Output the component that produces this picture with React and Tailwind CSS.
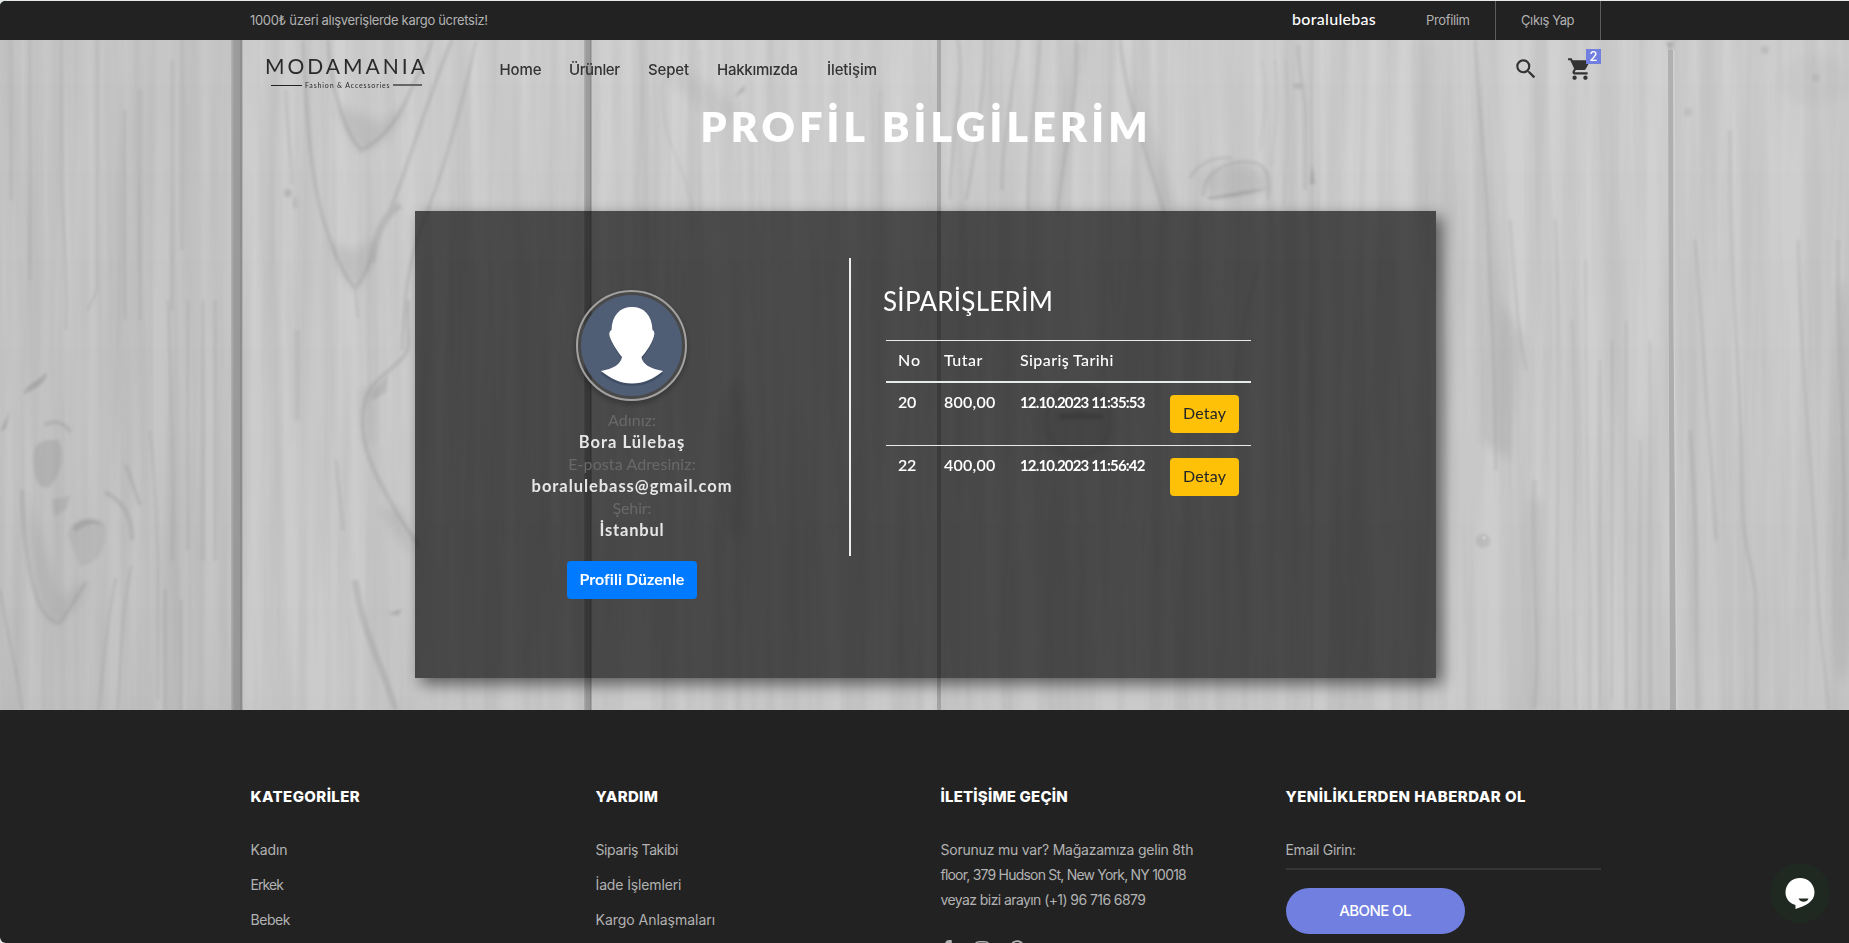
import React from "react";
import { MdSearch, MdShoppingCart } from "react-icons/md";
import { FaFacebookF, FaInstagram, FaPinterestP } from "react-icons/fa";

const navLinks = [
  ["Home", "w-[69.5px] tracking-[-0.12px]"],
  ["Ürünler", "w-[79px] tracking-[-0.39px]"],
  ["Sepet", "w-[69px] tracking-[-0.17px]"],
  ["Hakkımızda", "w-[110px] tracking-[-0.25px]"],
  ["İletişim", "w-[60px] tracking-[-0.11px]"],
];

const orders = [
  { no: "20", total: "800,00", date: "12.10.2023 11:35:53" },
  { no: "22", total: "400,00", date: "12.10.2023 11:56:42" },
];

const profile = [
  { label: "Adınız:", labelClass: "tracking-[0.09px]", value: "Bora Lülebaş", valueClass: "tracking-[1.05px]" },
  { label: "E-posta Adresiniz:", labelClass: "tracking-[0.1px]", value: "boralulebass@gmail.com", valueClass: "tracking-[0.95px]" },
  { label: "Şehir:", labelClass: "tracking-[-0.13px]", value: "İstanbul", valueClass: "tracking-[0.8px]" },
];

function Wood() {
  return (
    <svg className="absolute inset-0 -z-10 h-full w-full" viewBox="0 40 1849 670" preserveAspectRatio="none" aria-hidden="true">
      <defs>
        <filter id="grain" x="0" y="0" width="100%" height="100%" colorInterpolationFilters="sRGB">
          <feTurbulence type="fractalNoise" baseFrequency="0.06 0.0022" numOctaves="3" seed="7" />
          <feColorMatrix values="0 0 0 0 0.5  0 0 0 0 0.5  0 0 0 0 0.5  0.32 0 0 0 -0.09" />
        </filter>
        <filter id="soft" x="-10%" y="-10%" width="120%" height="120%">
          <feGaussianBlur stdDeviation="1.6" />
        </filter>
        <filter id="softer" x="-20%" y="-20%" width="140%" height="140%">
          <feGaussianBlur stdDeviation="5" />
        </filter>
        <linearGradient id="gap" x1="0" x2="1" y1="0" y2="0">
          <stop offset="0" stopColor="#b4b4b4" />
          <stop offset="0.25" stopColor="#9d9d9d" />
          <stop offset="0.7" stopColor="#9b9b9b" />
          <stop offset="0.85" stopColor="#868686" />
          <stop offset="1" stopColor="#c4c4c4" />
        </linearGradient>
        <linearGradient id="fade" x1="0" x2="0" y1="0" y2="1">
          <stop offset="0" stopColor="#000" stopOpacity="0" />
          <stop offset="1" stopColor="#000" stopOpacity="0.03" />
        </linearGradient>
      </defs>
      <rect x="0" y="40" width="232" height="670" fill="#cacaca" />
      <rect x="232" y="40" width="356" height="670" fill="#d1d1d1" />
      <rect x="588" y="40" width="352" height="670" fill="#d2d2d2" />
      <rect x="940" y="40" width="373" height="670" fill="#d1d1d1" />
      <rect x="1313" y="40" width="361" height="670" fill="#d2d2d2" />
      <rect x="1674" y="40" width="175" height="670" fill="#d0d0d0" />
      <rect x="0" y="40" width="1849" height="670" filter="url(#grain)" />

      <g filter="url(#softer)" fill="#8e8e8e" opacity="0.2">
        <path d="M288 250L300 320V420L290 460Z" opacity="0.2" />
        <path d="M334 104L348 135L362 152L388 138L408 104L380 122Z" />
        <path d="M326 240L342 275L355 290L372 268L376 240L352 250Z" />
        <path d="M25 490C30 560 40 625 58 622C78 610 88 590 84 580L60 600Z" />
        <path d="M1072 40L1086 40L1072 130L1062 210L1052 210Z" />
        <path d="M1118 40L1132 90L1162 210L1176 210L1142 110Z" />
        <path d="M1476 40L1500 300L1524 340L1510 460L1482 440L1486 260Z" />
        <path d="M1410 40L1440 40L1452 220L1440 300L1415 200Z" opacity="0.5" />
        <path d="M1530 500L1542 500L1542 710L1530 710Z" />
        <path d="M360 390L374 385L372 440L364 450Z" />
        <path d="M380 510L402 510L418 560L400 540Z" />
        <ellipse cx="1235" cy="182" rx="32" ry="18" />
        <ellipse cx="1078" cy="425" rx="38" ry="40" />
        <ellipse cx="735" cy="460" rx="12" ry="80" />
        <ellipse cx="1815" cy="80" rx="34" ry="24" opacity="0.35" />
        <ellipse cx="1842" cy="480" rx="12" ry="200" />
        <path d="M662 75L690 70L740 110L720 125Z" opacity="0.6" />
      </g>

      <g filter="url(#soft)" fill="none" stroke="#8c8c8c" strokeWidth="3" opacity="0.27">
        <path d="M303 40C306 120 312 180 322 215S345 278 355 288C368 275 372 250 388 215S430 90 452 40" strokeWidth="3.5" />
        <path d="M328 40C330 80 342 130 361 150C385 140 402 112 410 92S428 60 432 40" strokeWidth="4" />
        <path d="M476 40C462 110 440 180 424 220S404 300 402 350" />
        <path d="M286 90C286 130 292 150 292 185" strokeWidth="2" />
        <path d="M355 290L358 318" strokeWidth="2" />
        <path d="M400 205C385 215 376 230 372 262" strokeWidth="7" />
        <path d="M408 300C406 340 412 345 404 356S372 380 366 398S362 438 370 460S400 520 418 545" strokeWidth="4" />
        <path d="M355 580C362 630 380 660 396 710" strokeWidth="6" />
        <path d="M336 460L343 530" strokeWidth="2" />
        <path d="M297 330V420" strokeWidth="6" opacity="0.5" />
        <path d="M22 490C24 560 35 600 44 612S60 628 66 614L86 582" strokeWidth="3" />
        <path d="M126 465L140 505" />
        <path d="M116 578C106 620 105 660 98 710M131 566C120 620 122 660 117 710M165 590V710M181 600V710M0 590C8 640 18 670 22 710" strokeWidth="2" />
        <path d="M150 430C156 480 156 520 158 560V700M168 300C172 420 174 480 172 560M188 300V550M203 300V560M215 300V560" strokeWidth="2" />
        <path d="M62 40V180C62 230 68 260 66 330M97 40V290L88 310M11 40V200M30 40V280M125 110V320M140 90V320M172 60V310M182 40V250" strokeWidth="2.5" opacity="0.8" />
        <path d="M105 492C120 500 132 512 132 540M45 425C55 418 66 424 70 432" strokeWidth="4" />
        <path d="M1120 40C1126 100 1146 150 1164 212" />
        <path d="M1076 40C1080 100 1062 150 1058 212M958 40C966 80 950 140 950 200M985 40C985 90 978 140 966 200M1018 40C1014 90 1002 140 1002 190M1040 40C1036 100 1028 140 1028 210" strokeWidth="2.5" />
        <path d="M1298 45C1298 70 1304 88 1305 110V190" strokeWidth="2.5" />
        <path d="M1262 60C1270 100 1262 130 1260 150M1275 60C1281 110 1272 140 1272 165M1285 60C1292 120 1286 160 1284 205" strokeWidth="1.5" opacity="0.6" />
        <path d="M1475 40C1480 120 1486 170 1488 230S1496 380 1496 470" strokeWidth="2.5" />
        <path d="M1510 220C1514 270 1516 320 1526 370" strokeWidth="2" />
        <path d="M1555 220C1560 300 1556 400 1558 710M1572 320C1578 420 1572 560 1576 710M1586 260C1584 400 1592 560 1590 710M1600 360V710M1612 340V700M1626 320V710M1640 440V710M1650 340V710" strokeWidth="2" opacity="0.7" />
        <path d="M1535 480C1530 560 1542 640 1534 710" strokeWidth="5" opacity="0.6" />
        <path d="M1730 130C1730 300 1742 400 1742 480S1754 560 1756 600V710M1695 240C1704 350 1710 450 1716 540M1690 430C1700 560 1694 620 1698 710" strokeWidth="3" opacity="0.8" />
        <path d="M1798 240C1800 360 1812 460 1816 560S1826 660 1828 710M1838 240C1836 330 1846 420 1844 560" strokeWidth="3" opacity="0.7" />
        <path d="M640 40C646 140 632 190 640 211M662 80C660 150 690 170 692 211M700 50V211M760 130V211M845 60V211M880 90V211" strokeWidth="2" opacity="0.5" />
        <path d="M1203 196C1204 170 1230 160 1250 162S1270 180 1268 200M1190 178C1200 160 1220 156 1232 158" strokeWidth="2.5" />
        <path d="M1238 400C1230 360 1250 300 1260 260" opacity="0.5" />
        <ellipse cx="1078" cy="420" rx="32" ry="36" strokeWidth="2" />
        <path d="M1312 40V710" strokeWidth="2" opacity="0.6" />
      </g>

      <g filter="url(#soft)" fill="#8a8a8a" opacity="0.45">
        <path d="M24 392C30 382 40 380 47 372C46 384 36 388 24 394Z" />
        <path d="M0 432L10 410L6 428Z" />
        <path d="M34 455C34 440 48 440 58 440C66 455 60 475 50 486C38 492 33 475 34 455Z" opacity="0.6" />
        <path d="M52 500L70 496L66 510L54 516Z" opacity="0.5" />
        <path d="M68 535C70 515 100 515 105 525C108 550 95 565 80 566Z" opacity="0.35" />
        <path d="M72 528C80 516 98 518 104 526C96 522 84 524 76 532Z" />
        <path d="M372 392L388 375L386 392L372 400Z" opacity="0.6" />
        <path d="M733 98L745 85L744 91Z" />
        <path d="M1208 197C1225 196 1250 188 1270 189C1250 192 1228 200 1208 199Z" />
        <path d="M1058 414L1080 412L1103 415V419H1060Z" />
        <path d="M1310 184L1312 163L1315 184Z" />
        <path d="M1666 42H1674L1670 52Z" />
        <ellipse cx="288" cy="193" rx="4" ry="4" opacity="0.7" />
        <ellipse cx="295" cy="203" rx="3" ry="6" opacity="0.4" />
        <ellipse cx="1298" cy="86" rx="5" ry="3" opacity="0.6" />
        <ellipse cx="1483" cy="541" rx="7" ry="7" opacity="0.5" />
        <circle cx="1765" cy="50" r="4" opacity="0.5" />
        <circle cx="1816" cy="78" r="4" opacity="0.4" />
        <circle cx="1688" cy="112" r="4" opacity="0.4" />
        <path d="M388 614L402 609L398 615Z" />
      </g>
      <circle cx="1484" cy="538" r="2" fill="#d0d0d0" />

      <rect x="231" y="40" width="12" height="670" fill="url(#gap)" />
      <rect x="584" y="40" width="8" height="670" fill="url(#gap)" />
      <rect x="937" y="40" width="4" height="670" fill="#a8a8a8" />
      <path d="M1668 50H1673L1676 710H1670Z" fill="#b0b0b0" />
      <path d="M1674 50V320L1677 710" fill="none" stroke="#d8d8d8" />
      <rect x="0" y="40" width="1849" height="670" fill="url(#fade)" />
    </svg>
  );
}

function Logo() {
  return (
    <div className="mt-[15px] ml-4 flex w-[160px] flex-col items-center text-[#2a2a2a]">
      <div className="w-[162px] font-['Lato'] text-[21px] leading-[21px] font-normal tracking-[3px] whitespace-nowrap">MODAMANIA</div>
      <div className="mt-[3px] flex w-full items-center pl-[5px]">
        <span className="h-px w-[31px] bg-[#222]" />
        <span className="ml-[3px] w-[85px] font-['Lato'] text-[7px] leading-[12px] tracking-[0.85px] whitespace-nowrap">Fashion &amp; Accessories</span>
        <span className="ml-[3px] h-[2px] w-[29px] bg-[#666]" />
      </div>
    </div>
  );
}

function Avatar() {
  return (
    <div className="mr-[2px] size-[111px] shrink-0 rounded-full border-2 border-[#a3a1a0] p-[3px] shadow-[0_3px_6px_rgba(0,0,0,0.3)]">
      <svg viewBox="0 0 101 101" className="size-[101px]">
        <circle cx="50.5" cy="50.5" r="50.5" fill="#4f5d75" />
        <path
          d="M20 79C30 87 40 91 51 91S73 87 82 79L80 77C70 75 61 71 61 64C66 58 71 49 73 42C74 39 73 37 71.500 36C71 20 64 12.500 51 12.500S31 20 30.500 36C28.500 37 28 39 28.500 42C31 49 36 58 41 64C40 71 32 75 22 76Z"
          fill="#37445a" opacity="0.6"
        />
        <path
          d="M20 76C30 84 40 88.500 51 88.500S73 84 82 76C70 74 61 69 60.500 62C66 56 71 48 73 41C74 38 73 35.500 71.500 35C71 20 63 12 51 12S31 20 30.500 35C28.500 36 28 38 28.500 41C31 48 36 56 41 62C40 69 32 74 20 76Z"
          fill="#fff"
        />
      </svg>
    </div>
  );
}

function Orders() {
  const row = "grid grid-cols-[46px_76px_150px_69px] pl-3";
  return (
    <div className="w-[365px] font-['Lato'] text-[16px] text-white">
      <div className={row + " h-[43px] border-t border-b-2 border-t-[#e6ecea] border-b-[#e6ecea] pt-[7px] leading-6 font-medium"}>
        <span className="tracking-[0.9px]">No</span>
        <span className="tracking-[0.45px]">Tutar</span>
        <span className="whitespace-nowrap tracking-[0.4px]">Sipariş Tarihi</span>
      </div>
      {orders.map((o, i) => (
        <div key={o.no} className={row + (i ? " h-[63px] border-t border-[#e6ecea] pt-3" : " h-[62px] pt-3")}>
          <span className="-mt-[5px] font-semibold leading-6 tracking-[-0.4px]">{o.no}</span>
          <span className="-mt-[5px] font-semibold leading-6 tracking-[0.25px]">{o.total}</span>
          <span className="-mt-[5px] text-[15px] font-bold leading-6 tracking-[-0.83px] whitespace-nowrap">{o.date}</span>
          <button className="h-[38px] rounded bg-[#ffc107] pb-[2px] tracking-[0.2px] text-[#212529]">Detay</button>
        </div>
      ))}
    </div>
  );
}

function FooterTitle({ children, className }) {
  return <h4 className={"font-['Inter'] text-[15px] leading-5 font-extrabold whitespace-nowrap text-white " + className}>{children}</h4>;
}

function FooterLinks({ title, titleClass, items }) {
  return (
    <div className="w-[345px]">
      <FooterTitle className={titleClass}>{title}</FooterTitle>
      <ul className="mt-[32px]">
        {items.map(([t, c]) => (
          <li key={t} className={"h-[35px] leading-[21px] whitespace-nowrap " + c}>{t}</li>
        ))}
      </ul>
    </div>
  );
}

export default function App() {
  return (
    <div className="h-[943px] w-[1849px] overflow-hidden bg-[#e6ebe9]">
      <div className="relative flex h-full flex-col overflow-hidden rounded-l-[6px] border-t border-[#e6ebe9] bg-[#222] font-['Inter']">
        <header className="h-[39px] shrink-0 bg-[#222] pl-[250px]">
          <div className="flex h-full w-[1351px] items-center text-[13px] text-[#b2b2b2]">
            <span className="tracking-[-0.32px] whitespace-nowrap">1000₺ üzeri alışverişlerde kargo ücretsiz!</span>
            <span className="ml-auto w-[108px] pb-[3px] font-['Lato'] text-[16px] font-medium tracking-[0.3px] text-white">boralulebas</span>
            <a className="flex h-full w-[96px] items-center border-r border-[#5c5c5c] pl-[26px] tracking-[-0.35px]">Profilim</a>
            <a className="flex h-full w-[105px] items-center border-r border-[#5c5c5c] pl-[25px] tracking-[-0.38px] whitespace-nowrap">Çıkış Yap</a>
          </div>
        </header>

        <main className="relative isolate h-[670px] shrink-0">
          <Wood />
          <div className="ml-[250px] flex h-[60px] w-[1351px] items-start">
            <Logo />
            <nav className="mt-[20px] ml-[73.5px] flex text-[15px] leading-5 font-medium text-[#333]">
              {navLinks.map(([t, c]) => (
                <a key={t} className={"whitespace-nowrap " + c}>{t}</a>
              ))}
            </nav>
            <div className="mt-[16px] ml-auto flex text-[26px] text-[#333]">
              <MdSearch className="mr-[28px]" />
              <div className="relative mr-[8px]">
                <MdShoppingCart />
                <span className="absolute -top-[7px] left-[19px] flex h-[15px] w-[15px] items-center justify-center bg-[#717fe0] text-[13px] font-medium text-white">2</span>
              </div>
            </div>
          </div>
          <h1 className="h-[71px] pt-[1px] pl-[700.5px] font-['Lato'] text-[41px] leading-[52px] font-extrabold tracking-[4.25px] whitespace-nowrap text-white">PROFİL BİLGİLERİM</h1>
          <section className="mt-[40px] ml-[415px] flex h-[467px] w-[1021px] bg-black/64 font-['Lato'] shadow-[6px_6px_15px_rgba(0,0,0,0.55)]">
            <div className="flex w-[434px] flex-col items-center pt-[79px]">
              <Avatar />
              <div className="mt-2 text-center text-[16px]">
                {profile.map((p) => (
                  <div key={p.label} className="leading-[22px]">
                    <div className={"text-[#686868] " + p.labelClass}>{p.label}</div>
                    <div className={"text-[16.5px] font-bold text-[#e6e6e6] " + p.valueClass}>{p.value}</div>
                  </div>
                ))}
              </div>
              <button className="mt-5 h-[38px] w-[130px] rounded bg-[#007bff] pb-[2px] text-[16px] font-bold tracking-[0.02px] whitespace-nowrap text-white">Profili Düzenle</button>
            </div>
            <div className="mt-[47px] h-[298px] w-[2px] bg-[#eee]" />
            <div className="pt-[72px] pl-[32px]">
              <h2 className="mb-[21px] h-[36px] text-[26px] leading-9 tracking-[0.25px] text-white">SİPARİŞLERİM</h2>
              <div className="ml-[3px]">
                <Orders />
              </div>
            </div>
          </section>
        </main>

        <footer className="flex h-[233px] overflow-hidden pt-[77px] pl-[250.5px] text-[14px] text-[#b2b2b2]">
          <FooterLinks
            title="KATEGORİLER"
            titleClass="tracking-[0.4px]"
            items={[["Kadın", "tracking-[-0.13px]"], ["Erkek", "tracking-[-0.95px]"], ["Bebek", "tracking-[-0.44px]"]]}
          />
          <FooterLinks
            title="YARDIM"
            titleClass="tracking-[0.3px]"
            items={[["Sipariş Takibi", "tracking-[-0.39px]"], ["İade İşlemleri", "tracking-[-0.13px]"], ["Kargo Anlaşmaları", "tracking-[-0.03px]"]]}
          />
          <div className="w-[345px]">
            <FooterTitle className="tracking-[0.2px]">İLETİŞİME GEÇİN</FooterTitle>
            <p className="mt-[30px] leading-[25px] whitespace-nowrap">
              <span className="block tracking-[-0.22px]">Sorunuz mu var? Mağazamıza gelin 8th</span>
              <span className="block tracking-[-0.79px]">floor, 379 Hudson St, New York, NY 10018</span>
              <span className="block tracking-[-0.58px]">veyaz bizi arayın (+1) 96 716 6879</span>
            </p>
            <div className="mt-[28px] -ml-[3px] flex gap-[17px] text-[18px] text-[#b2b2b2]">
              <FaFacebookF />
              <FaInstagram />
              <FaPinterestP />
            </div>
          </div>
          <div className="w-[315px]">
            <FooterTitle className="tracking-[0.45px]">YENİLİKLERDEN HABERDAR OL</FooterTitle>
            <div className="mt-[30px] h-[33px] border-b-2 border-[#363636] pt-[2px] leading-[21px] tracking-[-0.33px]">Email Girin:</div>
            <button className="mt-[18px] h-[46px] w-[179px] rounded-full bg-[#717fe0] text-[15px] font-medium tracking-[-0.6px] text-white">ABONE OL</button>
          </div>
        </footer>

        <div className="absolute top-[862px] left-[1770px] flex size-[60px] items-center justify-center rounded-full bg-[#1f2921]">
          <svg viewBox="0 0 30 31" className="h-[31px] w-[30px]">
            <path d="M15 0C23 0 29.500 6 29.500 14.500C29.500 24 20 28 10.500 31V27C4.500 25.500 0.500 20.500 0.500 14.500C0.500 6 7 0 15 0Z" fill="#fff" />
            <path d="M13.500 20.500H23.500C22 24.800 15.500 24.800 13.500 20.500Z" fill="#1f2921" />
          </svg>
        </div>
      </div>
    </div>
  );
}
